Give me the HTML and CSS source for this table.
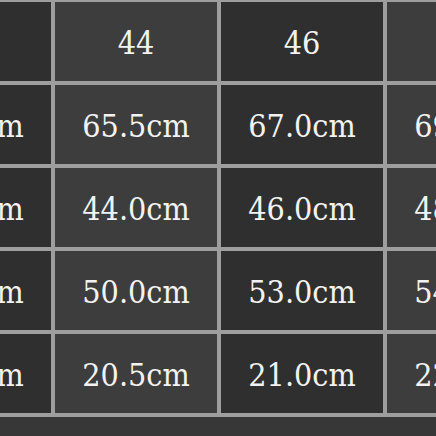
FILE: index.html
```html
<!DOCTYPE html>
<html>
<head>
<meta charset="utf-8">
<link rel="stylesheet" href="styles.css">
</head>
<body>
<div class="viewport">
  <div class="chart">
    <div class="cell">42</div><div class="cell">44</div><div class="cell">46</div><div class="cell">48</div>
    <div class="cell">64.0cm</div><div class="cell">65.5cm</div><div class="cell">67.0cm</div><div class="cell">69.0cm</div>
    <div class="cell">42.0cm</div><div class="cell">44.0cm</div><div class="cell">46.0cm</div><div class="cell">48.0cm</div>
    <div class="cell">48.0cm</div><div class="cell">50.0cm</div><div class="cell">53.0cm</div><div class="cell">54.0cm</div>
    <div class="cell">20.0cm</div><div class="cell">20.5cm</div><div class="cell">21.0cm</div><div class="cell">22.0cm</div>
  </div>
</div>
</body>
</html>
```

FILE: styles.css
```css
html, body {
  margin: 0;
  padding: 0;
  background: #363636;
}
.viewport {
  width: 436px;
  height: 436px;
  overflow: hidden;
  background: #373737;
}
.chart {
  display: grid;
  grid-template-columns: repeat(4, 162px);
  grid-auto-rows: 79px;
  gap: 4px;
  padding: 2px 4px 4px 4px;
  margin-left: -115px;
  width: max-content;
  background: #9e9e9e;
}
.cell {
  display: flex;
  align-items: center;
  justify-content: center;
  background: #2f2f2f;
  color: #f2f2f2;
  font-family: "DejaVu Serif", serif;
  font-stretch: condensed;
  font-size: 32px;
  white-space: nowrap;
  padding-top: 2px;
}
.cell:nth-child(2n) {
  background: #3d3d3d;
}
```
